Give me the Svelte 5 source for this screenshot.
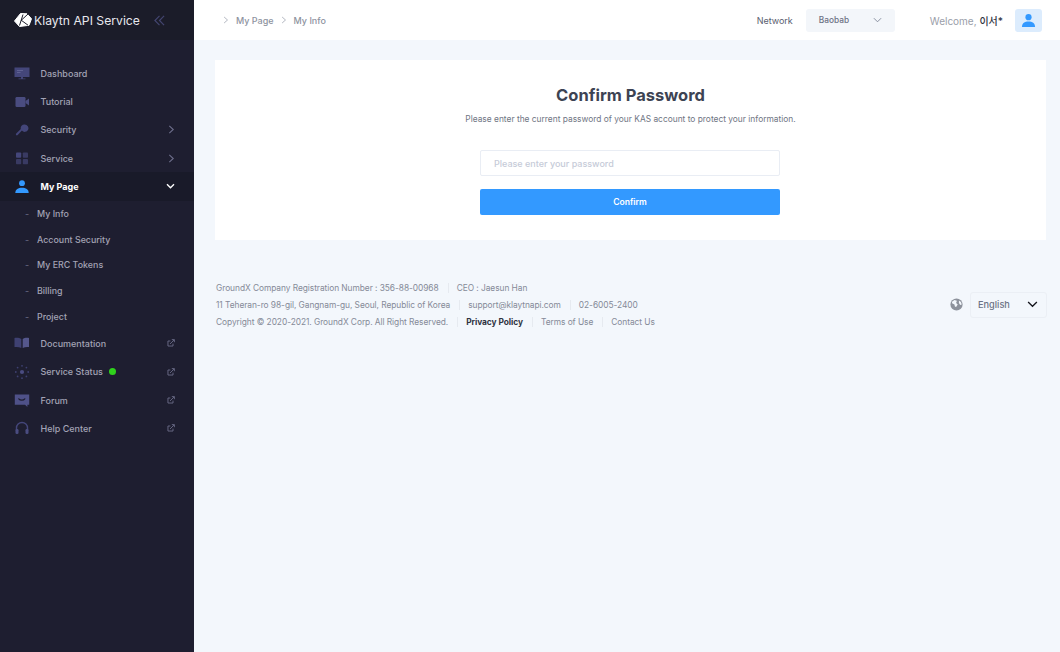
<script>
	// Sidebar data
	const topItems = [
		{ label: 'Dashboard', icon: 'monitor' },
		{ label: 'Tutorial', icon: 'video' },
		{ label: 'Security', icon: 'key', arrow: true },
		{ label: 'Service', icon: 'grid', arrow: true }
	];
	const subItems = ['My Info', 'Account Security', 'My ERC Tokens', 'Billing', 'Project'];
	const bottomItems = [
		{ label: 'Documentation', icon: 'book' },
		{ label: 'Service Status', icon: 'sun', dot: true },
		{ label: 'Forum', icon: 'chat' },
		{ label: 'Help Center', icon: 'headset' }
	];
</script>

{#snippet navIcon(name)}
	<svg class="nav-icon" viewBox="0 0 16 16" width="16" height="16">
		{#if name === 'monitor'}
			<path d="M.5 2.500h15v9.500H.5z" fill="#44467a" />
			<path d="M7 12h2v1.500h2.500v.8h-7v-.8H7z" fill="#44467a" />
			<path d="M3 5h6v1H3zM3 7h3.500v1H3z" fill="#5f6192" />
		{:else if name === 'video'}
			<rect x="1.500" y="3" width="10" height="10" rx="1.200" fill="#4a4c80" />
			<path d="M11.500 7l3.500-2.500v7L11.500 9z" fill="#4a4c80" />
		{:else if name === 'key'}
			<path d="M10.700 2.500a3.700 3.700 0 1 1-2.800 6.100l-4.400 4.600-1.600.1.100-1.500 4.800-4.700a3.700 3.700 0 0 1 3.900-4.600z" fill="#44467a" />
		{:else if name === 'grid'}
			<rect x="2" y="2.500" width="5.200" height="5.200" rx=".8" fill="#44467a" />
			<rect x="8.800" y="2.500" width="5.200" height="5.200" rx=".8" fill="#393a62" />
			<rect x="2" y="9" width="5.200" height="5.200" rx=".8" fill="#393a62" />
			<rect x="8.800" y="9" width="5.200" height="5.200" rx=".8" fill="#393a62" />
		{:else if name === 'person'}
			<circle cx="8" cy="4.200" r="2.900" fill="#3399ff" />
			<path d="M1.300 14c0-3.600 3-5.200 6.700-5.200s6.700 1.600 6.700 5.200z" fill="#3399ff" />
		{:else if name === 'book'}
			<path d="M.5 3c2.800-.4 5.200 0 6.800 1v9c-1.800-.9-4-1.200-6.800-.9z" fill="#3f4172" />
			<path d="M8.700 4c1.400-1 3.800-1.400 6.300-1v9.100c-2.300-.3-4.500 0-6.300.9z" fill="#55578c" />
		{:else if name === 'sun'}
			<circle cx="8" cy="8" r="2.100" fill="#4a4c80" />
			<g fill="#3e4070">
				<circle cx="8" cy="1.800" r=".9" /><circle cx="8" cy="14.200" r=".9" />
				<circle cx="1.800" cy="8" r=".9" /><circle cx="14.200" cy="8" r=".9" />
				<circle cx="3.600" cy="3.600" r=".9" /><circle cx="12.400" cy="3.600" r=".9" />
				<circle cx="3.600" cy="12.400" r=".9" /><circle cx="12.400" cy="12.400" r=".9" />
			</g>
		{:else if name === 'chat'}
			<path d="M.8 2.500h14.400v10.300h-1.800v2.200l-2.400-2.200H.8z" fill="#4f5188" />
			<path d="M4.800 6.800c1.400 1.800 4.600 1.800 6 0" fill="none" stroke="#1e1e30" stroke-width="1.200" stroke-linecap="round" />
		{:else if name === 'headset'}
			<path d="M2.500 10V8a5.500 5.500 0 0 1 11 0v2" fill="none" stroke="#44467a" stroke-width="1.400" />
			<rect x="1.500" y="9" width="3" height="5" rx="1.200" fill="#4a4c80" />
			<rect x="11.500" y="9" width="3" height="5" rx="1.200" fill="#4a4c80" />
		{/if}
	</svg>
{/snippet}

{#snippet external()}
	<svg class="trail" viewBox="0 0 10 10" width="8" height="8" fill="none" stroke="#6e6f8c" stroke-width="1.100">
		<path d="M7.500 5.800v3H1.200V2.500h3" />
		<path d="M3.800 6.200L9 1M6 .8h3.200V4" />
	</svg>
{/snippet}

<div class="layout">
	<aside class="sidebar">
		<div class="brand">
			<svg class="logo" viewBox="0 0 18 14" width="18" height="14">
				<path d="M6.500.5L13 .8l4.500 5-2.500 6.500-9.500 1.200L.5 8z" fill="#fff" stroke="#fff" stroke-linejoin="round" />
				<path d="M5.500 12.500L9 1.500M7 7.500L14 1M7.200 7.200l6.800 5" stroke="#1b1c29" stroke-width="1" fill="none" />
			</svg>
			<span class="brand-name">Klaytn API Service</span>
			<svg class="collapse" viewBox="0 0 12 12" width="11" height="11" fill="none" stroke="#43456f" stroke-width="1.300">
				<path d="M6 1L1 6l5 5M11 1L6 6l5 5" />
			</svg>
		</div>

		<nav class="nav">
			{#each topItems as item}
				<div class="item">
					{@render navIcon(item.icon)}
					<span>{item.label}</span>
					{#if item.arrow}
						<svg class="trail" viewBox="0 0 8 10" width="7" height="9" fill="none" stroke="#6e6f8c" stroke-width="1.200"><path d="M1.500 .8L6 5 1.500 9.200" /></svg>
					{/if}
				</div>
			{/each}

			<div class="item active">
				{@render navIcon('person')}
				<span>My Page</span>
				<svg class="trail open" viewBox="0 0 10 8" width="9" height="7" fill="none" stroke="#fff" stroke-width="1.600"><path d="M1 1.500L5 5.500 9 1.500" /></svg>
			</div>
			<ul class="sub">
				{#each subItems as sub}
					<li><i>-</i>{sub}</li>
				{/each}
			</ul>

			{#each bottomItems as item}
				<div class="item">
					{@render navIcon(item.icon)}
					<span>{item.label}</span>
					{#if item.dot}<b class="dot"></b>{/if}
					{@render external()}
				</div>
			{/each}
		</nav>
	</aside>

	<div class="main">
		<header class="topbar">
			<div class="crumbs">
				<svg viewBox="0 0 8 10" width="6" height="8" fill="none" stroke="#9a9fac" stroke-width="1"><path d="M1.500 1L6 5 1.500 9" /></svg>
				<span>My Page</span>
				<svg viewBox="0 0 8 10" width="6" height="8" fill="none" stroke="#9a9fac" stroke-width="1"><path d="M1.500 1L6 5 1.500 9" /></svg>
				<span>My Info</span>
			</div>
			<span class="network-label">Network</span>
			<div class="network">
				<span>Baobab</span>
				<svg viewBox="0 0 10 6" width="9" height="6" fill="none" stroke="#7d8496" stroke-width="1"><path d="M1 1l4 4 4-4" /></svg>
			</div>
			<span class="welcome">Welcome, <em>이서*</em></span>
			<div class="avatar">
				<svg viewBox="0 0 16 16" width="15" height="15">
					<circle cx="8" cy="4.400" r="3.300" fill="#3399ff" />
					<path d="M1 14.800c0-4 3-5.800 7-5.800s7 1.800 7 5.800z" fill="#3399ff" />
				</svg>
			</div>
		</header>

		<div class="content">
			<section class="card">
				<h1>Confirm Password</h1>
				<p>Please enter the current password of your KAS account to protect your information.</p>
				<div class="form">
					<input type="password" placeholder="Please enter your password" />
					<button type="button">Confirm</button>
				</div>
			</section>

			<footer class="footer">
				<div class="info">
					<div class="row">
						<span>GroundX Company Registration Number : 356-88-00968</span>
						<span>CEO : Jaesun Han</span>
					</div>
					<div class="row">
						<span>11 Teheran-ro 98-gil, Gangnam-gu, Seoul, Republic of Korea</span>
						<span>support@klaytnapi.com</span>
						<span>02-6005-2400</span>
					</div>
					<div class="row">
						<span>Copyright © 2020-2021. GroundX Corp. All Right Reserved.</span>
						<span class="strong">Privacy Policy</span>
						<span>Terms of Use</span>
						<span>Contact Us</span>
					</div>
				</div>
				<div class="lang">
					<svg viewBox="0 0 16 16" width="13" height="13">
						<circle cx="8" cy="8" r="7.500" fill="#8d929c" />
						<path d="M2.500 4.500l3-2 3 1-1 2.500 2 2-2 3-1.500-.5-.5-2.500-3-1.500zM11 3l2.500 2 1 3-2 .5-1.500-2.500z" fill="#f3f7fc" />
					</svg>
					<div class="lang-select">
						<span>English</span>
						<svg viewBox="0 0 12 8" width="11" height="7" fill="none" stroke="#14151c" stroke-width="1.500"><path d="M1 1.200L6 6l5-4.800" /></svg>
					</div>
				</div>
			</footer>
		</div>
	</div>
</div>

<style>
	:global(body) {
		margin: 0;
		font-family: Inter, "Noto Sans CJK KR", sans-serif;
	}

	.layout {
		display: flex;
		width: 1060px;
		height: 652px;
		overflow: hidden;
		background: #f3f7fc;
	}

	.sidebar {
		width: 194px;
		flex: none;
		background: #1e1e30;
		color: #a3a3b5;
	}

	.brand {
		height: 40px;
		display: flex;
		align-items: center;
		padding-left: 14px;
		background: #1b1c29;
		box-sizing: border-box;
	}

	.brand-name {
		margin-left: 2px;
		color: #e8e8ee;
		font-size: 12.200px;
		white-space: nowrap;
	}

	.collapse {
		margin-left: 14px;
	}

	.nav {
		padding-top: 19px;
	}

	.item {
		height: 28.350px;
		display: flex;
		align-items: center;
		padding: 0 19px 0 13.500px;
		font-size: 9px;
		font-weight: 500;
	}

	.nav-icon {
		flex: none;
		margin-right: 11px;
	}

	.trail {
		margin-left: auto;
	}

	.active {
		background: #191a29;
		color: #fff;
		font-weight: 700;
	}

	.dot {
		width: 7px;
		height: 7px;
		margin-left: 6px;
		border-radius: 50%;
		background: #2fd21c;
	}

	.sub {
		list-style: none;
		margin: 0;
		padding: 0;
	}

	.sub li {
		height: 25.700px;
		display: flex;
		align-items: center;
		padding-left: 25px;
		font-size: 8.900px;
		font-weight: 500;
	}

	.sub i {
		width: 12px;
		font-style: normal;
		color: #62637c;
	}

	.main {
		flex: 1;
		min-width: 0;
	}

	.topbar {
		height: 40px;
		display: flex;
		align-items: center;
		padding: 0 18px 0 29px;
		background: #fff;
		font-size: 9px;
	}

	.crumbs {
		display: flex;
		align-items: center;
		gap: 7px;
		color: #8e93a0;
		font-weight: 500;
	}

	.network-label {
		margin-left: auto;
		color: #5a606f;
		font-weight: 400;
	}

	.network {
		width: 89px;
		height: 23px;
		margin-left: 13px;
		padding: 0 13px;
		box-sizing: border-box;
		display: flex;
		align-items: center;
		justify-content: space-between;
		border-radius: 3px;
		background: #f3f6fa;
		color: #6c7284;
		font-size: 8.300px;
		font-weight: 500;
	}

	.welcome {
		margin-left: 35px;
		color: #9a9ea9;
		font-size: 10px;
	}

	.welcome em {
		font-style: normal;
		font-weight: 500;
		color: #30343f;
	}

	.avatar {
		width: 27px;
		height: 23px;
		margin-left: 12px;
		display: flex;
		align-items: center;
		justify-content: center;
		border-radius: 3px;
		background: #dcecfd;
	}

	.content {
		padding: 20px 14px 0 21px;
	}

	.card {
		height: 180px;
		box-sizing: border-box;
		padding-top: 25px;
		background: #fff;
		text-align: center;
	}

	h1 {
		margin: 0;
		font-size: 16.500px;
		line-height: 20px;
		font-weight: 700;
		color: #3d4353;
	}

	.card p {
		margin: 8px 0 0;
		font-size: 8.400px;
		line-height: 12px;
		color: #6f7583;
	}

	.form {
		width: 300px;
		margin: 25px 0 0 265px;
		display: flex;
		flex-direction: column;
		gap: 13px;
	}

	input {
		height: 26px;
		box-sizing: border-box;
		padding: 0 13px;
		border: 1px solid #e9edf4;
		border-radius: 2px;
		outline: none;
		font: 500 9px Inter, sans-serif;
	}

	input::placeholder {
		color: #c6cbd8;
	}

	button {
		height: 26px;
		border: none;
		border-radius: 2px;
		background: #3399ff;
		color: #fff;
		font: 600 8.600px Inter, sans-serif;
	}

	.footer {
		display: flex;
		align-items: center;
		justify-content: space-between;
		margin: 41.500px -1px 0 0;
		padding-left: 1px;
	}

	.info {
		display: flex;
		flex-direction: column;
		gap: 5px;
		color: #858a98;
		font-size: 8.400px;
		letter-spacing: -0.06px;
		line-height: 12px;
	}

	.row {
		display: flex;
		gap: 18px;
		white-space: nowrap;
	}

	.row span {
		position: relative;
	}

	.row span + span::before {
		content: '';
		position: absolute;
		left: -9px;
		top: 1px;
		height: 10px;
		width: 1px;
		background: #e6eaf0;
	}

	.strong {
		color: #2f3442;
		font-weight: 700;
	}

	.lang {
		display: flex;
		align-items: center;
		gap: 7px;
	}

	.lang-select {
		width: 77px;
		height: 26px;
		box-sizing: border-box;
		padding: 0 8px 0 7px;
		display: flex;
		align-items: center;
		justify-content: space-between;
		border: 1px solid #ebeff5;
		border-radius: 3px;
		color: #6c7284;
		font-size: 9.200px;
		font-weight: 500;
	}
</style>
